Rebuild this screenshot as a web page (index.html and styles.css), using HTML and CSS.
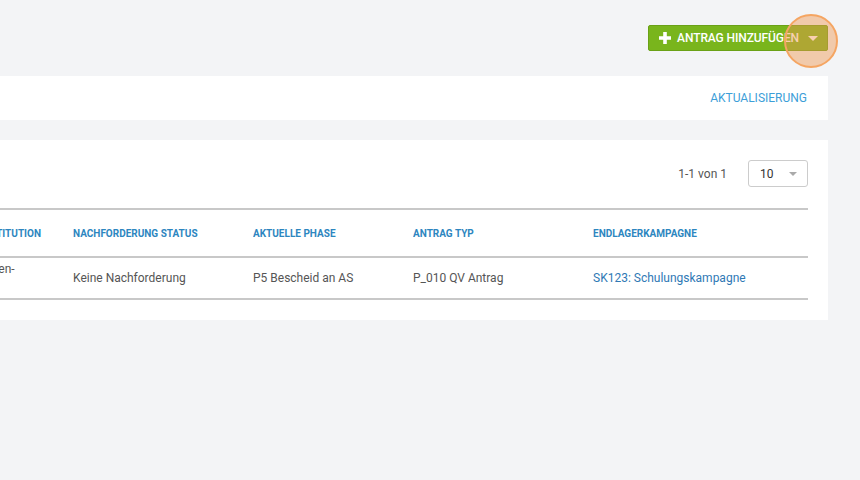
FILE: index.html
```html
<!DOCTYPE html>
<html lang="de">
<head>
    <meta charset="UTF-8">
    <title>Anträge</title>
    <link rel="stylesheet" href="styles.css">
</head>
<body>
<div id="page">
    <div class="toolbar">
        <button class="btn-add">
            <svg class="plus" width="12" height="12" viewBox="0 0 12 12"><path d="M4.2 0h3.6v4.2H12v3.6H7.8V12H4.2V7.8H0V4.2h4.2z" fill="#fff"/></svg>
            <span>ANTRAG HINZUFÜGEN</span>
            <span class="caret"></span>
        </button>
        <span class="highlight"></span>
    </div>

    <div class="panel panel-head">
        <a class="refresh" href="#">AKTUALISIERUNG</a>
    </div>

    <div class="panel panel-list">
        <div class="pager">
            <span class="count">1-1 von 1</span>
            <div class="select">
                <span>10</span>
                <span class="select-caret"></span>
            </div>
        </div>
        <table class="grid">
            <colgroup>
                <col style="width: 93px">
                <col style="width: 180px">
                <col style="width: 160px">
                <col style="width: 180px">
                <col>
            </colgroup>
            <thead>
            <tr>
                <th>INSTITUTION</th>
                <th>NACHFORDERUNG STATUS</th>
                <th>AKTUELLE PHASE</th>
                <th>ANTRAG TYP</th>
                <th>ENDLAGERKAMPAGNE</th>
            </tr>
            </thead>
            <tbody>
            <tr>
                <td>Daten-<br>AG</td>
                <td>Keine Nachforderung</td>
                <td>P5 Bescheid an AS</td>
                <td>P_010 QV Antrag</td>
                <td><a href="#">SK123: Schulungskampagne</a></td>
            </tr>
            </tbody>
        </table>
    </div>
</div>
</body>
</html>
```

FILE: styles.css
```css
* {
    margin: 0;
    padding: 0;
    box-sizing: border-box;
}

html, body {
    overflow: hidden;
}

body {
    background-color: #f3f4f6;
    font-family: Roboto, "Liberation Sans", sans-serif;
    font-size: 12px;
    color: #555555;
}

a {
    text-decoration: none;
}

#page {
    margin-left: -40px;
    padding: 25px 32px 0 0;
}

.toolbar {
    position: relative;
    display: flex;
    justify-content: flex-end;
    height: 26px;
    margin-bottom: 25px;
}

.btn-add {
    display: flex;
    align-items: center;
    gap: 6px;
    height: 26px;
    padding: 0 9px 0 10px;
    border: 1px solid #6aa116;
    border-radius: 2px;
    background-color: #79b51c;
    color: #ffffff;
    font-family: Roboto, "Liberation Sans", sans-serif;
    font-size: 12px;
    font-weight: 500;
    letter-spacing: -0.1px;
}

.btn-add .caret {
    margin-left: 3px;
    border-left: 5px solid transparent;
    border-right: 5px solid transparent;
    border-top: 5px solid #ffffff;
}

.highlight {
    position: absolute;
    right: -10px;
    top: -11px;
    width: 54px;
    height: 54px;
    border: 2px solid #f5a562;
    border-radius: 50%;
    background-color: rgba(240, 150, 80, 0.45);
}

.panel {
    background-color: #ffffff;
    padding: 0 20px;
}

.panel-head {
    display: flex;
    align-items: center;
    justify-content: flex-end;
    height: 44px;
    margin-bottom: 20px;
}

.refresh {
    color: #3c9ed8;
    font-size: 12px;
    padding-right: 1px;
}

.panel-list {
    padding: 20px 20px 20px 20px;
}

.pager {
    display: flex;
    align-items: center;
    justify-content: flex-end;
    gap: 21px;
    margin-bottom: 21px;
}

.count {
    color: #555555;
    font-size: 12px;
}

.select {
    display: flex;
    align-items: center;
    justify-content: space-between;
    width: 60px;
    height: 27px;
    padding: 0 10px 0 11px;
    border: 1px solid #cccccc;
    border-radius: 3px;
    color: #333333;
}

.select-caret {
    border-left: 4px solid transparent;
    border-right: 4px solid transparent;
    border-top: 4px solid #aaaaaa;
}

.grid {
    width: 100%;
    table-layout: fixed;
    border-collapse: collapse;
    border-top: 2px solid #c8c8c8;
}

.grid th {
    height: 48px;
    padding: 0 8px 0 0;
    text-align: left;
    font-size: 10px;
    font-weight: 700;
    color: #2d86bf;
    white-space: nowrap;
    overflow: hidden;
    border-bottom: 2px solid #c8c8c8;
}

.grid td {
    height: 42px;
    padding: 2px 8px 2px 0;
    line-height: 18px;
    font-size: 12px;
    color: #555555;
    border-bottom: 2px solid #c8c8c8;
}

.grid td a {
    color: #2f79b5;
}
```
